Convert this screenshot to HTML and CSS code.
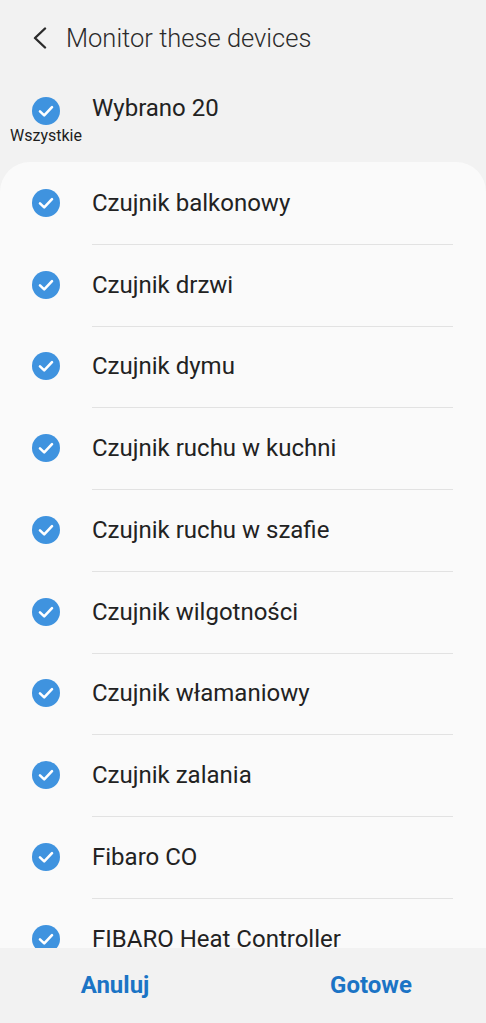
FILE: index.html
```html
<!DOCTYPE html>
<html lang="pl">
<head>
    <meta charset="UTF-8">
    <meta name="viewport" content="width=device-width, initial-scale=1.0">
    <title>Monitor these devices</title>
    <link rel="stylesheet" href="styles.css">
</head>
<body>

    <div class="screen">
        <div class="header">
            <svg class="back" width="16" height="22" viewBox="0 0 16 22">
                <path d="M13 1.5 L3 11 L13 20.5" fill="none" stroke="#2b2b2b" stroke-width="2.4" stroke-linecap="round" stroke-linejoin="round"/>
            </svg>
            <h1>Monitor these devices</h1>
        </div>

        <div class="select-all">
            <div class="all-box">
                <svg class="check" width="28" height="28" viewBox="0 0 28 28">
                    <circle cx="14" cy="14" r="14" fill="#3f93df"/>
                    <path d="M8 14.4 L12.2 18.4 L20 10.2" fill="none" stroke="#fff" stroke-width="2.6" stroke-linecap="round" stroke-linejoin="round"/>
                </svg>
                <span class="all-label">Wszystkie</span>
            </div>
            <span class="count">Wybrano 20</span>
        </div>

        <div class="card">
            <ul class="device-list" id="device-list"></ul>
        </div>

        <div class="footer">
            <button class="action">Anuluj</button>
            <button class="action">Gotowe</button>
        </div>
    </div>

    <script>
        const devices = [
            'Czujnik balkonowy',
            'Czujnik drzwi',
            'Czujnik dymu',
            'Czujnik ruchu w kuchni',
            'Czujnik ruchu w szafie',
            'Czujnik wilgotności',
            'Czujnik włamaniowy',
            'Czujnik zalania',
            'Fibaro CO',
            'FIBARO Heat Controller'
        ];

        const check = `
            <svg class="check" width="28" height="28" viewBox="0 0 28 28">
                <circle cx="14" cy="14" r="14" fill="#3f93df"/>
                <path d="M8 14.4 L12.2 18.4 L20 10.2" fill="none" stroke="#fff" stroke-width="2.6" stroke-linecap="round" stroke-linejoin="round"/>
            </svg>`;

        document.getElementById('device-list').innerHTML = devices.map(name => `
            <li class="device">
                ${check}
                <span class="name">${name}</span>
            </li>
        `).join('');
    </script>

</body>
</html>
```

FILE: styles.css
```css
body {
    font-family: Roboto, "Noto Sans", sans-serif;
    margin: 0;
    padding: 0;
    background: #f2f2f2;
    color: #252525;
}
.screen {
    height: 1023px;
    display: flex;
    flex-direction: column;
    overflow: hidden;
}
.header {
    display: flex;
    align-items: center;
    height: 76px;
    padding-left: 32px;
    box-sizing: border-box;
}
.back {
    margin-right: 18px;
}
.header h1 {
    margin: 0;
    font-size: 25.5px;
    font-weight: 300;
    color: #2b2b2b;
}
.select-all {
    display: flex;
    align-items: flex-start;
    height: 86px;
    flex-shrink: 0;
}
.all-box {
    width: 92px;
    display: flex;
    flex-direction: column;
    align-items: center;
    padding-top: 21px;
}
.all-label {
    font-size: 16px;
    color: #1e1e1e;
    margin-top: 1px;
    line-height: 20px;
}
.count {
    font-size: 24px;
    line-height: 28px;
    padding-top: 18px;
    color: #222;
}
.card {
    flex: 1;
    background: #fafafa;
    border-radius: 30px 30px 0 0;
    overflow: hidden;
    min-height: 0;
}
.device-list {
    list-style: none;
    margin: 0;
    padding: 0;
}
.device {
    display: flex;
    align-items: center;
    height: 81.75px;
    position: relative;
}
.device .check {
    margin-left: 32px;
    margin-right: 32px;
    flex-shrink: 0;
}
.device .name {
    font-size: 24px;
    color: #222;
}
.device + .device::before {
    content: "";
    position: absolute;
    top: 0;
    left: 92px;
    right: 33px;
    height: 1px;
    background: #e2e2e2;
}
.footer {
    height: 75px;
    flex-shrink: 0;
    background: #f2f2f2;
    display: flex;
    gap: 26px;
}
.action {
    flex: 1;
    border: none;
    background: none;
    font-family: Roboto, "Noto Sans", sans-serif;
    font-size: 24px;
    font-weight: 700;
    color: #1b74c5;
    padding: 0 0 2px;
    cursor: pointer;
}
```
